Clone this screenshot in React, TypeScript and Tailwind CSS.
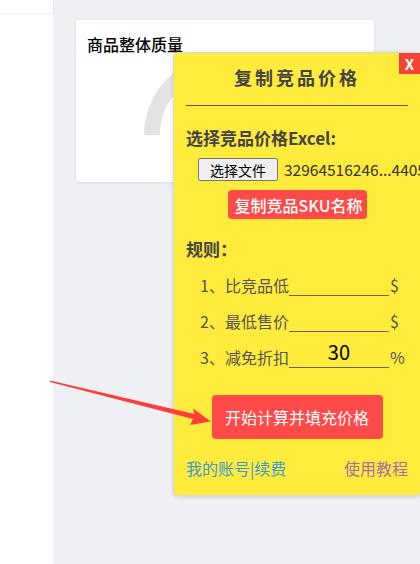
// Competitor price copy panel floating over a dashboard
function Gauge() {
  return (
    <svg width="298" height="100" viewBox="0 0 298 100" className="block">
      <path
        d="M 76 81 A 72 72 0 0 1 220 81"
        fill="none"
        stroke="#e3e3e3"
        strokeWidth="16"
      />
    </svg>
  );
}

function Arrow() {
  return (
    <svg
      width="420"
      height="564"
      viewBox="0 0 420 564"
      className="absolute left-0 top-0 pointer-events-none"
    >
      <polygon
        points="50,380.5 194.5,414 193,408.5 211,421.5 190,425 193,419 50,382"
        fill="#ff3d3d"
      />
    </svg>
  );
}

function RuleRow({ label, unit, value }: { label: string; unit: string; value?: string }) {
  return (
    <div className="flex items-end h-[36px] pl-[26px]">
      <span className="text-[16px] text-[#555] leading-[20px] pb-[1px]">{label}</span>
      <div className="w-[100px] h-[26px] border-b border-[#666] flex items-center justify-center text-[20px] text-black leading-none pb-[6px]">
        {value}
      </div>
      <span className="text-[16px] text-[#555] leading-[20px] pb-[1px] ml-[1px]">{unit}</span>
    </div>
  );
}

export default function App() {
  return (
    <div
      className="relative w-[420px] h-[564px] overflow-hidden bg-[#eff0f4] flex"
      style={{ fontFamily: '"Noto Sans CJK SC", "Noto Sans", sans-serif' }}
    >
      {/* left nav */}
      <div className="w-[53px] h-full bg-white flex flex-col">
        <div className="h-[13px] bg-white shadow-[0_1px_2px_rgba(0,0,0,0.08)]" />
      </div>

      {/* main area */}
      <div className="flex-1 pl-[23px] pt-[20px]">
        <div className="w-[298px] h-[162px] bg-white rounded-[4px] shadow-[0_1px_3px_rgba(0,0,0,0.1)]">
          <div className="pl-[11px] pt-[14px] text-[16px] leading-[20px] text-black font-medium">
            商品整体质量
          </div>
          <Gauge />
        </div>
      </div>

      {/* popup */}
      <div className="absolute left-[173px] top-[52px] w-[248px] h-[444px] bg-[#ffeb3b] rounded-[5px] border border-[#d9d9d9] shadow-[0_1px_4px_rgba(0,0,0,0.15)] flex flex-col">
        <div className="absolute right-0 top-0 w-[21px] h-[21px] bg-[#f44336] flex items-center justify-center text-white text-[15px] font-bold leading-none">
          X
        </div>

        <div className="pt-[11px] text-center text-[18px] leading-[26px] font-bold text-[#444] tracking-[3px]">
          复制竞品价格
        </div>
        <div className="mx-[12px] mt-[15px] h-px bg-[#5a5a3a]" />

        <div className="mt-[20px] pl-[12px] text-[17px] leading-[24px] font-bold text-[#444]">
          选择竞品价格Excel:
        </div>
        <div className="mt-[8px] pl-[24px] flex items-center gap-[6px] whitespace-nowrap">
          <button className="shrink-0 w-[80px] h-[23px] bg-[#efefef] border border-[#767676] rounded-[2px] text-[14px] leading-none text-black">
            选择文件
          </button>
          <span className="text-[15.5px] text-[#333] leading-none">32964516246...4405</span>
        </div>
        <div className="mt-[9px] flex justify-center">
          <button className="w-[139px] h-[29px] bg-[#ff4a4a] rounded-[4px] text-white text-[16px] font-medium leading-none pl-[3px]">
            复制竞品SKU名称
          </button>
        </div>

        <div className="mt-[18px] pl-[12px] text-[17px] leading-[24px] font-bold text-[#444]">
          规则：
        </div>
        <div className="-mt-[1px]">
          <RuleRow label="1、比竞品低" unit="$" />
          <RuleRow label="2、最低售价" unit="$" />
          <RuleRow label="3、减免折扣" unit="%" value="30" />
        </div>

        <div className="mt-[27px] flex justify-center">
          <button className="w-[171px] h-[44px] bg-[#ff4a4a] rounded-[4px] text-white text-[16px] leading-none">
            开始计算并填充价格
          </button>
        </div>

        <div className="mt-[19px] px-[12px] flex justify-between text-[16px] leading-[20px]">
          <span className="text-[#3a9bcf]">我的账号|续费</span>
          <span className="text-[#a46fa3]">使用教程</span>
        </div>
      </div>

      <Arrow />
    </div>
  );
}
